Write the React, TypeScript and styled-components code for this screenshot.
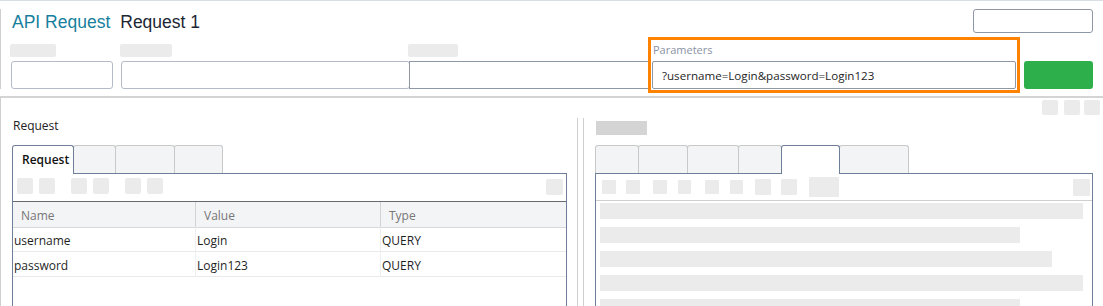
import React from "react";
import styled, { createGlobalStyle } from "styled-components";

const GlobalStyle = createGlobalStyle`
  * { box-sizing: border-box; }
  body {
    margin: 0;
    background: #fff;
    font-family: "Open Sans", "Noto Sans", sans-serif;
    font-size: 12px;
    color: #222;
  }
`;

const leftTabs = [
  { label: "Request", w: 62, active: true },
  { label: "", w: 43 },
  { label: "", w: 60 },
  { label: "", w: 49 },
];

const rightTabs = [
  { w: 44 },
  { w: 50 },
  { w: 52 },
  { w: 44 },
  { w: 59, active: true },
  { w: 70 },
];

// right toolbar squares: width, height, gap before
const rightTools = [
  { w: 14, h: 14, gap: 0 },
  { w: 14, h: 14, gap: 10 },
  { w: 14, h: 14, gap: 13 },
  { w: 13, h: 14, gap: 11 },
  { w: 14, h: 14, gap: 14 },
  { w: 13, h: 14, gap: 11 },
  { w: 16, h: 16, gap: 12 },
  { w: 16, h: 16, gap: 10 },
  { w: 30, h: 20, gap: 12 },
];

const skeletonWidths = [483, 420, 452, 483, 420];

const params = [
  { name: "username", value: "Login", type: "QUERY" },
  { name: "password", value: "Login123", type: "QUERY" },
];

const App = () => {
  return (
    <Page>
      <GlobalStyle />
      <Header>
        <HeaderInner>
          <TitleRow>
            <Title>
              <Kind>API Request</Kind>
              <ReqName>Request 1</ReqName>
            </Title>
            <TopBox />
          </TitleRow>
          <FieldRow>
            <Field $w={110}>
              <Placeholder $w={46} />
              <TextInput $w={102} readOnly />
            </Field>
            <Field $w={288}>
              <Placeholder $w={52} />
              <TextInput $w={289} readOnly />
            </Field>
            <Field $w={240}>
              <Placeholder $w={50} />
              <TextInput $w={243} $square readOnly />
            </Field>
            <ParamBox>
              <ParamLabel>Parameters</ParamLabel>
              <ParamInput
                readOnly
                defaultValue="?username=Login&password=Login123"
              />
            </ParamBox>
            <SendButton />
          </FieldRow>
        </HeaderInner>
      </Header>
      <Body>
        <IconBar>
          <BarSquare />
          <BarSquare $gap={6} />
          <BarSquare $gap={4} />
        </IconBar>
        <Split>
          <LeftPane>
            <PaneLabel>Request</PaneLabel>
            <Tabs>
              {leftTabs.map((t, i) => (
                <Tab key={i} $w={t.w} $active={t.active}>
                  {t.label}
                </Tab>
              ))}
            </Tabs>
            <LeftPanel>
              <LeftToolbar>
                <ToolGroup>
                  <Tool />
                  <Tool />
                </ToolGroup>
                <ToolGroup>
                  <Tool />
                  <Tool />
                </ToolGroup>
                <ToolGroup>
                  <Tool />
                  <Tool />
                </ToolGroup>
                <Spacer />
                <Tool $w={17} />
              </LeftToolbar>
              <ParamTable>
                <HeadCell>Name</HeadCell>
                <HeadCell>Value</HeadCell>
                <HeadCell $last>Type</HeadCell>
                {params.map((p) => (
                  <React.Fragment key={p.name}>
                    <Cell>{p.name}</Cell>
                    <Cell>{p.value}</Cell>
                    <Cell $last>{p.type}</Cell>
                  </React.Fragment>
                ))}
              </ParamTable>
            </LeftPanel>
          </LeftPane>
          <Splitter />
          <RightPane>
            <PaneTitle />
            <Tabs>
              {rightTabs.map((t, i) => (
                <Tab key={i} $w={t.w} $active={t.active} />
              ))}
            </Tabs>
            <RightPanel>
              <RightToolbar>
                {rightTools.map((t, i) => (
                  <RTool key={i} $w={t.w} $h={t.h} $gap={t.gap} />
                ))}
                <Spacer />
                <RTool $w={17} $h={17} $gap={0} />
              </RightToolbar>
              <Skeleton>
                {skeletonWidths.map((w, i) => (
                  <SkeletonBar key={i} $w={w} />
                ))}
              </Skeleton>
            </RightPanel>
          </RightPane>
        </Split>
      </Body>
    </Page>
  );
};

export default App;

const Page = styled.div`
  width: 1103px;
  height: 306px;
  overflow: hidden;
  background: #fff;
`;

/* ---------- header ---------- */

const Header = styled.div`
  height: 96px;
  border-top: 1px solid #d9dee5;
  padding: 8px 10px 0 0;
`;
const HeaderInner = styled.div`
  height: 80px;
  border-left: 1px solid #cfcfcf;
  padding-left: 9px;
`;
const TitleRow = styled.div`
  height: 24px;
  display: flex;
  justify-content: space-between;
  align-items: center;
`;
const Title = styled.div`
  display: flex;
  gap: 10px;
  margin-left: 2px;
  padding-top: 1px;
  font-family: "Liberation Sans", Arial, sans-serif;
  font-size: 17.5px;
  line-height: 22px;
`;
const Kind = styled.span`
  color: #177f9d;
`;
const ReqName = styled.span`
  color: #1c2633;
`;
const TopBox = styled.div`
  width: 120px;
  height: 24px;
  border: 1px solid #8d97a6;
  border-radius: 3px;
`;

const FieldRow = styled.div`
  margin-top: 4px;
  display: flex;
  align-items: flex-start;
`;
const Field = styled.div<{ $w: number }>`
  width: ${(p) => p.$w}px;
  margin-top: 7px;
  display: flex;
  flex-direction: column;
  gap: 4px;
`;
const Placeholder = styled.div<{ $w: number }>`
  width: ${(p) => p.$w}px;
  height: 13px;
  background: #ebebeb;
  border-radius: 2px;
`;
const TextInput = styled.input<{ $w: number; $square?: boolean }>`
  width: ${(p) => p.$w}px;
  height: 28px;
  margin: 0 0 0 1px;
  border: 1px solid ${(p) => (p.$square ? "#8e97a6" : "#b3bac8")};
  border-radius: ${(p) => (p.$square ? "0" : "3px")};
  background: #fff;
  outline: none;
`;
const ParamBox = styled.div`
  position: relative;
  width: 372px;
  height: 56px;
  border: 3px solid #ff8200;
  background: #fff;
  display: flex;
  flex-direction: column;
`;
const ParamLabel = styled.div`
  margin: 2px 0 0 2px;
  height: 16px;
  font-size: 11px;
  line-height: 16px;
  color: #8a92a5;
`;
const ParamInput = styled.input`
  width: 364px;
  height: 28px;
  margin: 3px 0 0 1px;
  padding: 0 0 0 9px;
  border: 1px solid #8d97a6;
  border-radius: 2px;
  font-family: inherit;
  font-size: 11.6px;
  color: #1f1f1f;
  background: #fff;
  outline: none;
`;
const SendButton = styled.div`
  width: 69px;
  height: 28px;
  margin: 24px 0 0 4px;
  background: #2db04b;
  border-radius: 3px;
`;

/* ---------- body ---------- */

const Body = styled.div`
  border-top: 2px solid #d4d4d4;
  border-left: 1px solid #cfcfcf;
  height: 210px;
  display: flex;
  flex-direction: column;
`;
const IconBar = styled.div`
  height: 20px;
  flex-shrink: 0;
  padding: 2px 3px 0 0;
  display: flex;
  justify-content: flex-end;
`;
const BarSquare = styled.div<{ $gap?: number }>`
  width: 16px;
  height: 15px;
  margin-left: ${(p) => p.$gap ?? 0}px;
  background: #ebebeb;
  border-radius: 2px;
`;
const Split = styled.div`
  flex: 1;
  display: flex;
  min-height: 0;
`;
const LeftPane = styled.div`
  width: 576px;
  padding-left: 11px;
  display: flex;
  flex-direction: column;
  min-height: 0;
`;
const Splitter = styled.div`
  width: 7px;
  border-left: 1px solid #cfcfcf;
  border-right: 1px solid #cfcfcf;
`;
const RightPane = styled.div`
  flex: 1;
  padding: 0 10px 0 11px;
  display: flex;
  flex-direction: column;
  min-height: 0;
`;
const PaneLabel = styled.div`
  height: 16px;
  flex-shrink: 0;
  margin: 0 0 11px 1px;
  line-height: 16px;
  font-size: 12px;
  color: #222;
`;
const PaneTitle = styled.div`
  width: 51px;
  height: 14px;
  flex-shrink: 0;
  margin: 3px 0 10px 1px;
  background: #d4d4d4;
`;

const Tabs = styled.div`
  height: 28px;
  flex-shrink: 0;
  display: flex;
  align-items: flex-end;
  position: relative;
  z-index: 1;
`;
const Tab = styled.div<{ $w: number; $active?: boolean }>`
  width: ${(p) => p.$w}px;
  height: ${(p) => (p.$active ? 29 : 28)}px;
  margin-bottom: ${(p) => (p.$active ? -1 : 0)}px;
  align-self: flex-start;
  position: relative;
  z-index: ${(p) => (p.$active ? 2 : 1)};
  border: 1px solid ${(p) => (p.$active ? "#6f7f9a" : "#c9c9c9")};
  border-bottom: none;
  border-radius: 3px 3px 0 0;
  background: ${(p) => (p.$active ? "#fff" : "#f3f4f6")};
  padding: 5px 0 0 9px;
  font-size: 12px;
  font-weight: 600;
  line-height: 18px;
  color: #111;

  & + & {
    margin-left: -1px;
  }
`;

const LeftPanel = styled.div`
  width: 555px;
  flex: 1;
  min-height: 0;
  overflow: hidden;
  border: 1px solid #6f7f9a;
  border-bottom: none;
`;
const LeftToolbar = styled.div`
  height: 27px;
  padding: 4px 3px 0 4px;
  display: flex;
  align-items: flex-start;
  gap: 16px;
`;
const ToolGroup = styled.div`
  display: flex;
  gap: 6px;
`;
const Tool = styled.div<{ $w?: number }>`
  width: ${(p) => p.$w ?? 16}px;
  height: 16px;
  margin-top: ${(p) => (p.$w ? 1 : 0)}px;
  background: #ebebeb;
  border-radius: 2px;
`;
const Spacer = styled.div`
  flex: 1;
`;

const ParamTable = styled.div`
  display: grid;
  grid-template-columns: 183px 185px 1fr;
  grid-auto-rows: 25px;
  border-top: 1px solid #666b72;
`;
const HeadCell = styled.div<{ $last?: boolean }>`
  height: 26px;
  padding: 1px 0 0 8px;
  background: #f3f4f6;
  border-right: ${(p) => (p.$last ? "none" : "1px solid #d3d3d3")};
  border-bottom: 1px solid #d9d9d9;
  line-height: 25px;
  color: #777;
`;
const Cell = styled.div<{ $last?: boolean }>`
  padding: 4px 0 0 1px;
  border-right: ${(p) => (p.$last ? "none" : "1px solid #efefef")};
  border-bottom: 1px solid #e9e9e9;
  line-height: 20px;
  color: #1f1f1f;
`;

const RightPanel = styled.div`
  width: 498px;
  flex: 1;
  min-height: 0;
  overflow: hidden;
  border: 1px solid #6f7f9a;
  border-bottom: none;
`;
const RightToolbar = styled.div`
  height: 27px;
  padding: 0 2px 0 6px;
  border-bottom: 1px solid #cfcfcf;
  display: flex;
  align-items: center;
`;
const RTool = styled.div<{ $w: number; $h: number; $gap: number }>`
  width: ${(p) => p.$w}px;
  height: ${(p) => p.$h}px;
  margin-left: ${(p) => p.$gap}px;
  background: #ebebeb;
  border-radius: 1px;
`;
const Skeleton = styled.div`
  padding: 2px 0 0 4px;
  display: flex;
  flex-direction: column;
  gap: 8px;
`;
const SkeletonBar = styled.div<{ $w: number }>`
  width: ${(p) => p.$w}px;
  height: 16px;
  flex-shrink: 0;
  background: #ebebeb;
`;
